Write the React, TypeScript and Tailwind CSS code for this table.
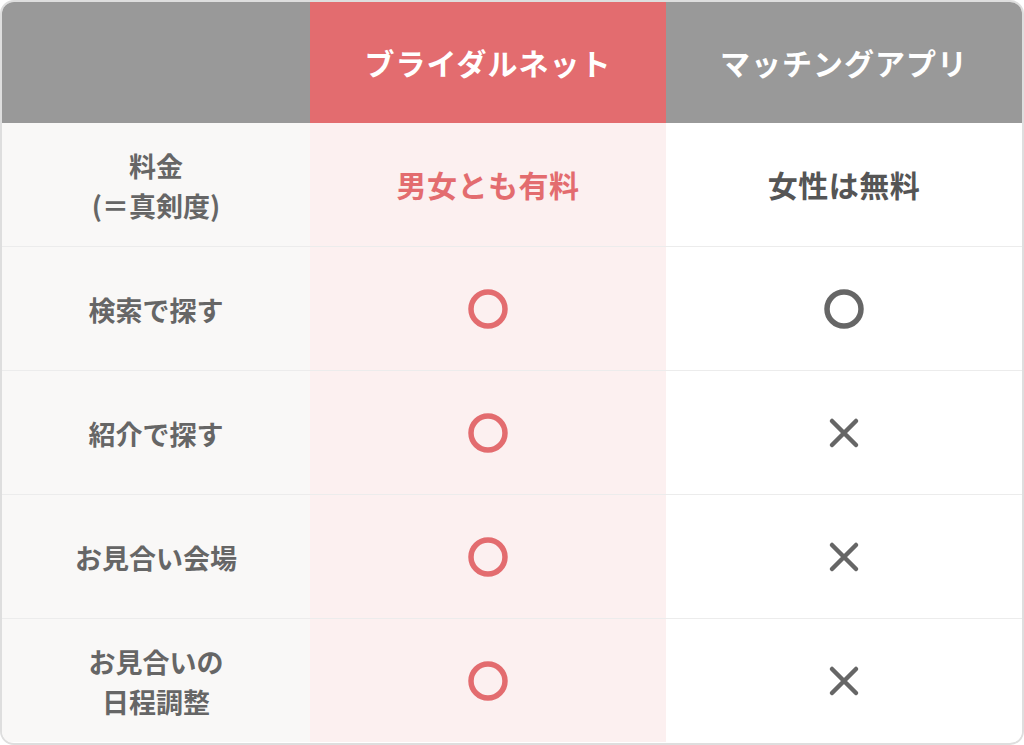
import React from "react";

type Mark = "o" | "x";

interface Row {
  label: string[];
  bridal: string | Mark;
  app: string | Mark;
}

const rows: Row[] = [
  { label: ["料金", "(＝真剣度)"], bridal: "男女とも有料", app: "女性は無料" },
  { label: ["検索で探す"], bridal: "o", app: "o" },
  { label: ["紹介で探す"], bridal: "o", app: "x" },
  { label: ["お見合い会場"], bridal: "o", app: "x" },
  { label: ["お見合いの", "日程調整"], bridal: "o", app: "x" },
];

const Circle = ({ color }: { color: string }) => (
  <svg width="40" height="40" viewBox="0 0 40 40">
    <circle cx="20" cy="20" r="17" fill="none" stroke={color} strokeWidth="5.5" />
  </svg>
);

const Cross = ({ color }: { color: string }) => (
  <svg width="32" height="32" viewBox="0 0 32 32">
    <path d="M4 4 L28 28 M28 4 L4 28" stroke={color} strokeWidth="4.5" strokeLinecap="round" />
  </svg>
);

const Cell = ({ value, color, textClass }: { value: string | Mark; color: string; textClass: string }) => {
  if (value === "o") return <Circle color={color} />;
  if (value === "x") return <Cross color={color} />;
  return <span className={textClass}>{value}</span>;
};

export default function App() {
  return (
    <div
      className="w-[1024px] h-[745px] bg-white"
      style={{ fontFamily: '"Noto Sans CJK JP", "Noto Sans", sans-serif' }}
    >
      <div className="h-full overflow-hidden rounded-[14px] border-2 border-[#dedede]">
        <div className="grid grid-cols-[308px_1fr_1fr] h-[121px]">
          <div className="bg-[#999999]"></div>
          <div className="bg-[#e36c6f] flex items-center justify-center text-white text-[30px] font-bold tracking-[1px]">
            ブライダルネット
          </div>
          <div className="bg-[#999999] flex items-center justify-center text-white text-[30px] font-bold tracking-[1px]">
            マッチングアプリ
          </div>
        </div>
        {rows.map((row, i) => (
          <div
            key={i}
            className={`grid grid-cols-[308px_1fr_1fr] ${i < rows.length - 1 ? "h-[124px] border-b border-[#ececec]" : "h-[123px]"}`}
          >
            <div className="bg-[#f9f8f7] flex flex-col items-center justify-center text-[#666666] text-[27px] font-bold leading-[40px] pt-[3px]">
              {row.label.map((l) => (
                <div key={l}>{l}</div>
              ))}
            </div>
            <div className="bg-[#fcf0f0] flex items-center justify-center">
              <Cell value={row.bridal} color="#e36c6f" textClass="text-[#e36c6f] text-[30px] font-bold tracking-[0.5px]" />
            </div>
            <div className="bg-white flex items-center justify-center">
              <Cell value={row.app} color="#666666" textClass="text-[#555555] text-[30px] font-bold tracking-[0.5px]" />
            </div>
          </div>
        ))}
      </div>
    </div>
  );
}
